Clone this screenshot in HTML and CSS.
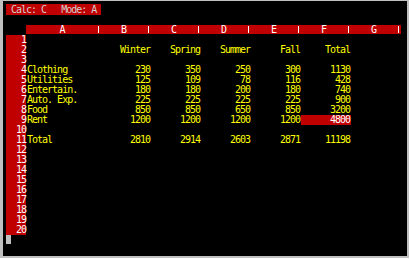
FILE: index.html
```html
<!DOCTYPE html>
<html lang="en">
<head>
    <meta charset="UTF-8">
    <title>Spreadsheet</title>
    <link rel="stylesheet" href="styles.css">
</head>
<body>
    <div class="screen">
        <div class="status">Calc: C   Mode: A</div>
        <div class="col-head">
            <div class="head first"><span class="lbl">A</span><span class="sep"></span></div>
            <div class="head"><span class="lbl">B</span><span class="sep"></span></div>
            <div class="head"><span class="lbl">C</span><span class="sep"></span></div>
            <div class="head"><span class="lbl">D</span><span class="sep"></span></div>
            <div class="head"><span class="lbl">E</span><span class="sep"></span></div>
            <div class="head"><span class="lbl">F</span><span class="sep"></span></div>
            <div class="head"><span class="lbl">G</span><span class="sep"></span></div>
        </div>
        <div class="sheet">
            <div class="row"><span class="num">1</span></div>
            <div class="row"><span class="num">2</span><span class="cell"></span><span class="cell">Winter</span><span class="cell">Spring</span><span class="cell">Summer</span><span class="cell">Fall</span><span class="cell">Total</span></div>
            <div class="row"><span class="num">3</span></div>
            <div class="row"><span class="num">4</span><span class="cell label">Clothing</span><span class="cell">230</span><span class="cell">350</span><span class="cell">250</span><span class="cell">300</span><span class="cell">1130</span></div>
            <div class="row"><span class="num">5</span><span class="cell label">Utilities</span><span class="cell">125</span><span class="cell">109</span><span class="cell">78</span><span class="cell">116</span><span class="cell">428</span></div>
            <div class="row"><span class="num">6</span><span class="cell label">Entertain.</span><span class="cell">180</span><span class="cell">180</span><span class="cell">200</span><span class="cell">180</span><span class="cell">740</span></div>
            <div class="row"><span class="num">7</span><span class="cell label">Auto. Exp.</span><span class="cell">225</span><span class="cell">225</span><span class="cell">225</span><span class="cell">225</span><span class="cell">900</span></div>
            <div class="row"><span class="num">8</span><span class="cell label">Food</span><span class="cell">850</span><span class="cell">850</span><span class="cell">650</span><span class="cell">850</span><span class="cell">3200</span></div>
            <div class="row"><span class="num">9</span><span class="cell label">Rent</span><span class="cell">1200</span><span class="cell">1200</span><span class="cell">1200</span><span class="cell">1200</span><span class="cell active">4800</span></div>
            <div class="row"><span class="num">10</span></div>
            <div class="row"><span class="num">11</span><span class="cell label">Total</span><span class="cell">2810</span><span class="cell">2914</span><span class="cell">2603</span><span class="cell">2871</span><span class="cell">11198</span></div>
            <div class="row"><span class="num">12</span></div>
            <div class="row"><span class="num">13</span></div>
            <div class="row"><span class="num">14</span></div>
            <div class="row"><span class="num">15</span></div>
            <div class="row"><span class="num">16</span></div>
            <div class="row"><span class="num">17</span></div>
            <div class="row"><span class="num">18</span></div>
            <div class="row"><span class="num">19</span></div>
            <div class="row"><span class="num">20</span></div>
        </div>
        <div class="cursor"></div>
    </div>
</body>
</html>
```

FILE: styles.css
```css
*{
    margin: 0;
    padding: 0;
    box-sizing: border-box;
}
body{
    background: #fff;
    font-family: "DejaVu Sans Mono", "Liberation Mono", monospace;
    font-size: 10px;
    letter-spacing: -1px;
}
.screen{
    width: 409px;
    height: 258px;
    background: #000;
    border-style: solid;
    border-color: #c0c0c0;
    border-width: 1px 2px 2px 3px;
}
.status{
    width: 95px;
    height: 11px;
    margin: 3px 0 0 3px;
    padding-left: 5px;
    background: #c00000;
    color: #d0d0d0;
    line-height: 11px;
    white-space: pre;
}
.col-head{
    display: flex;
    width: 375px;
    height: 9px;
    margin: 10px 0 0 23px;
    padding-right: 2px;
    background: #c00000;
    color: #fff;
    line-height: 9px;
}
.head{
    display: flex;
    align-items: center;
    width: 50px;
}
.head.first{
    width: 73px;
}
.head .lbl{
    flex: 1;
    text-align: center;
}
.head .sep{
    width: 1px;
    height: 7px;
    background: #fff;
}
.sheet{
    margin: 1px 0 0 3px;
}
.row{
    display: grid;
    grid-template-columns: 20px 75px repeat(6, 50px);
    height: 10px;
    line-height: 10px;
    color: #ffff00;
}
.num{
    background: #c00000;
    color: #fff;
    text-align: right;
}
.cell{
    text-align: right;
    padding-right: 1px;
    white-space: pre;
}
.cell.label{
    text-align: left;
    padding-left: 1px;
}
.cell.active{
    background: #c00000;
    color: #fff;
}
.cursor{
    width: 5px;
    height: 9px;
    margin-left: 3px;
    background: #c0c0c0;
}
```
